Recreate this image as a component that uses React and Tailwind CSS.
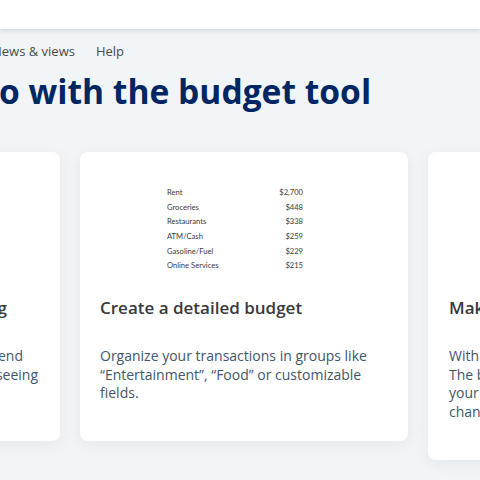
import React from "react";

const ROWS = [
  ["Rent", "$2,700"],
  ["Groceries", "$448"],
  ["Restaurants", "$338"],
  ["ATM/Cash", "$259"],
  ["Gasoline/Fuel", "$229"],
  ["Online Services", "$215"],
];

const BudgetList = () => (
  <div className="h-[128px] pt-[33px] pl-[87px]">
    <div className="w-[136px] font-['Lato',sans-serif] text-[7.6px] text-[#3a3a3a]">
      {ROWS.map(([label, amount]) => (
        <div key={label} className="flex justify-between h-[14.7px] leading-[14.7px]">
          <span>{label}</span>
          <span>{amount}</span>
        </div>
      ))}
    </div>
  </div>
);

const App = () => {
  return (
    <div className="relative w-[480px] h-[480px] overflow-hidden bg-[#f2f5f7] font-['Open_Sans',sans-serif]">
      {/* Top bar */}
      <div className="h-[29px] bg-white shadow-[0_2px_5px_rgba(0,0,0,0.12)]" />

      {/* Nav */}
      <nav className="flex gap-[21px] ml-[-8px] mt-[13px] text-[13px] text-[#4a4a4a] leading-[18px]">
        <span>News &amp; views</span>
        <span>Help</span>
      </nav>

      {/* Heading */}
      <h1 className="ml-[-1px] mt-[9px] text-[33.6px] leading-[44px] font-bold text-[#002663] whitespace-nowrap">
        o with the budget tool
      </h1>

      {/* Cards */}
      <div className="flex items-start gap-5 ml-[-268px] mt-[39px]">
        <div className="w-[328px] h-[289px] shrink-0 rounded-lg bg-white shadow-[0_4px_16px_rgba(0,0,0,0.06)]">
          <div className="h-[128px]" />
          <div className="text-right">
            <h2 className="pr-[53px] mt-[16px] text-[17px] leading-[24px] font-semibold text-[#3a3a3a] whitespace-nowrap">
              Track your spending
            </h2>
            <div className="pr-[22px] mt-[27px] text-[14px] leading-[18.7px] text-[#41566b] whitespace-nowrap">
              <p className="pr-[15px]">See how much you spend</p>
              <p>each month and keep seeing</p>
            </div>
          </div>
        </div>

        <div className="w-[328px] h-[289px] shrink-0 rounded-lg bg-white shadow-[0_4px_16px_rgba(0,0,0,0.06)]">
          <BudgetList />
          <div className="px-5">
            <h2 className="mt-[16px] text-[17px] leading-[24px] font-semibold text-[#3a3a3a] whitespace-nowrap">
              Create a detailed budget
            </h2>
            <p className="mt-[27px] text-[14px] leading-[18.7px] text-[#41566b]">
              Organize your transactions in groups like “Entertainment”, “Food” or customizable fields.
            </p>
          </div>
        </div>

        <div className="w-[328px] h-[308px] shrink-0 rounded-lg bg-white shadow-[0_4px_16px_rgba(0,0,0,0.06)]">
          <div className="h-[128px]" />
          <div className="px-[21px]">
            <h2 className="mt-[16px] text-[17px] leading-[24px] font-semibold text-[#3a3a3a] whitespace-nowrap">
              Make adjustments
            </h2>
            <div className="mt-[27px] text-[14px] leading-[18.7px] text-[#41566b] whitespace-nowrap">
              <p>With the budget tool you can</p>
              <p>The budget updates so</p>
              <p>your totals reflect every</p>
              <p>change you make.</p>
            </div>
          </div>
        </div>
      </div>
    </div>
  );
};

export default App;
